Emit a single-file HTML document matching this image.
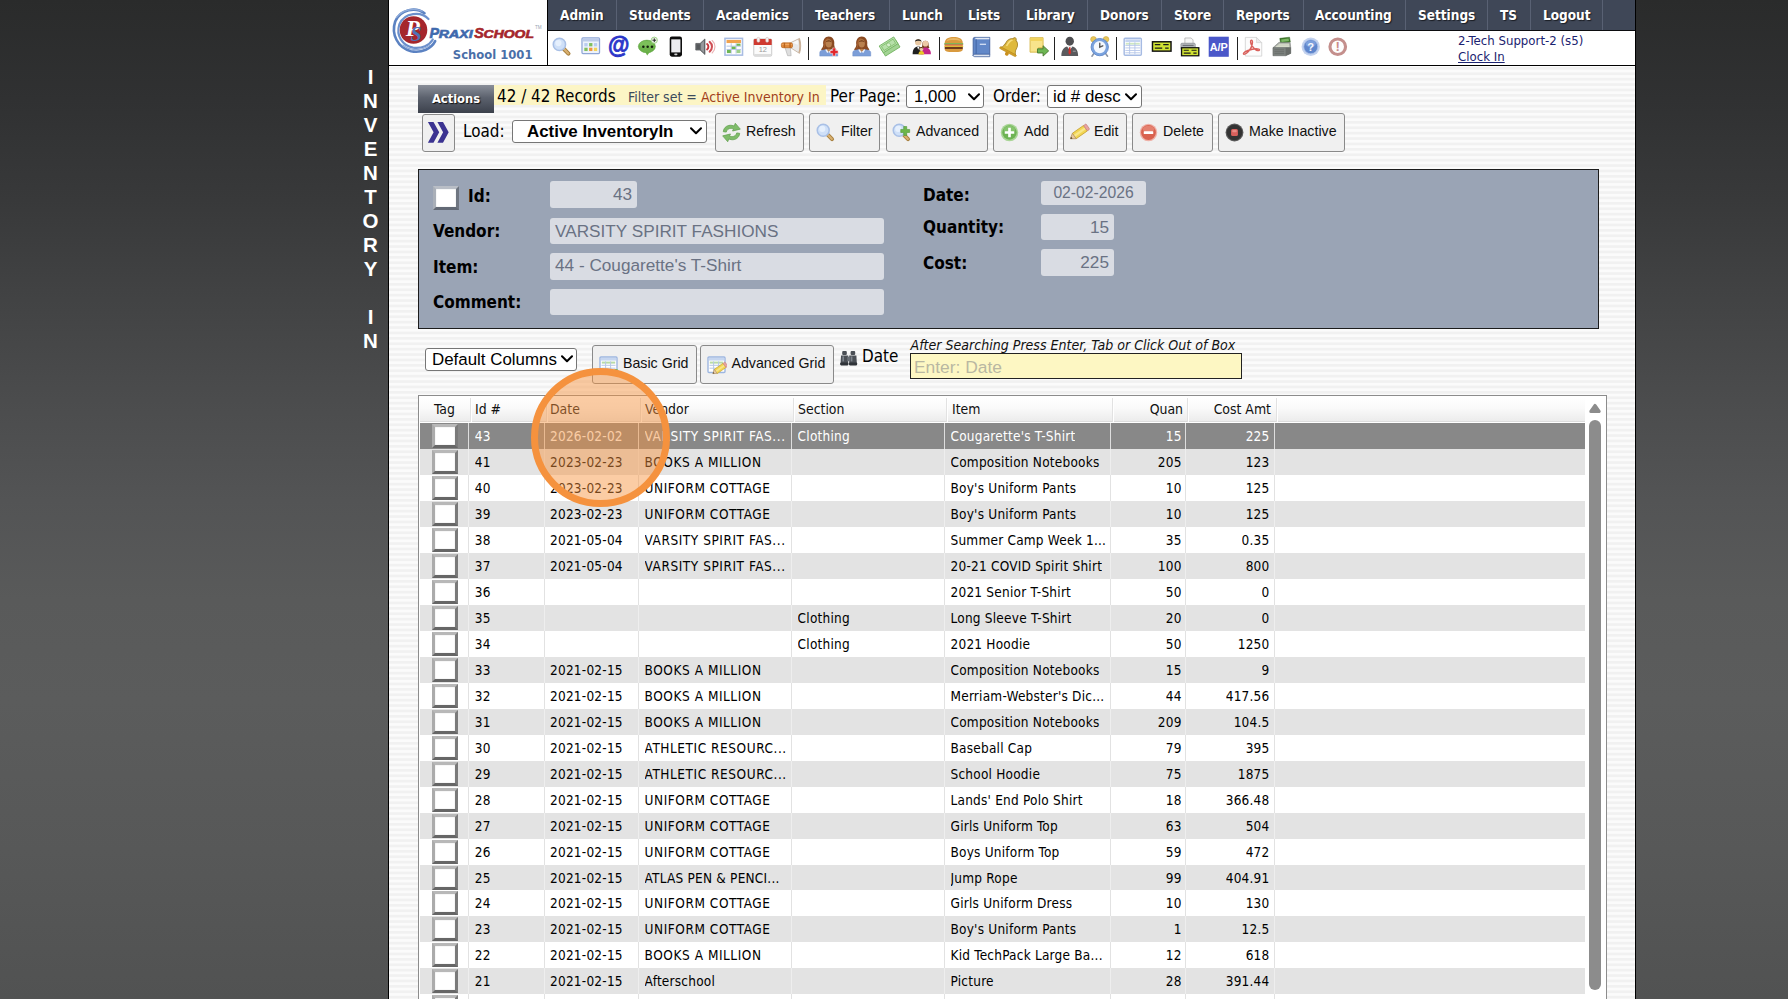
<!DOCTYPE html>
<html lang="en"><head><meta charset="utf-8"><title>Inventory In</title>
<style>
:root{--tah:"DejaVu Sans Condensed","DejaVu Sans","Liberation Sans",sans-serif;--ari:"Liberation Sans",Arial,sans-serif}
*{box-sizing:border-box;margin:0;padding:0}
html,body{width:1788px;height:999px;overflow:hidden}
body{position:relative;font-family:var(--tah);background:linear-gradient(to bottom,#2a2b2b 0px,#303132 100px,#38393a 200px,#424344 300px,#4b4c4d 400px,#535455 500px,#595a5a 600px,#5b5c5c 700px,#575858 850px,#515252 999px)}
.abs{position:absolute;white-space:nowrap}
#side{left:358px;top:65px;width:25px;text-align:center;color:#fff;font:bold 20.5px/24px var(--ari);}
#panel{left:388px;top:0;width:1248px;height:999px;border-left:1px solid #000;border-right:1px solid #000;background:repeating-linear-gradient(to bottom,#fbfbfb 0,#fbfbfb 1.7px,#f1f1f1 2.7px,#f1f1f1 4.4px,#fbfbfb 5.4px)}
#hdr{left:389px;top:0;width:1246px;height:66px;background:#fff;border-bottom:1px solid #000}
#nav{left:547px;top:0;width:1088px;height:31px;background:#3f4757;border-bottom:1px solid #0c0d10;border-left:1px solid #000}
.nv{top:0;height:30px;border-right:1px solid #596173;color:#fff;font:bold 13.5px/30px var(--tah);text-shadow:1px 1px 1px #1a1d24;padding:0 0 0 12px;letter-spacing:0}
#ldiv{left:547px;top:30px;width:1px;height:36px;background:#000}
.sep{top:37px;width:1px;height:23px;background:#222}
.t17{font:16.9px/20px var(--tah);color:#000}
.lab{font:bold 17px/20px var(--tah);color:#000}
.btn{height:39px;background:#f0f0f0;border:1px solid #8a8a8a;border-radius:3px;font:14.2px/34px var(--ari);color:#111}
.sel{height:23px;background:#fff;border:1px solid #767676;border-radius:3px;font:16.9px/21px var(--ari);color:#000}
.inp{background:#d9dce3;border-radius:3px;color:#6a7283;font:17.2px/26px var(--ari);padding:0 5px}
.cb{background:#fff;border:3px solid;border-color:#b9bec6 #6f7681 #626975 #a9afb8;box-shadow:inset 0 0 1px rgba(110,118,130,.6)}
#grid{left:418px;top:395px;width:1189px;height:620px;background:#fff;border:1px solid #8c8c8c}
#ghead{left:420px;top:397px;width:1165px;height:25px;background:linear-gradient(to bottom,#ffffff 0%,#fafafa 45%,#ececec 100%);border-bottom:1px solid #dcdcdc}
.hc{top:397px;height:25px;font:13.9px/25px var(--tah);color:#111}
.hs{top:398px;width:2px;height:24px;border-left:1px solid #e2e2e2;border-right:1px solid #fff}
.row{left:420px;width:1165px}
.row.alt{background:#e3e3e3}
.row.rsel{background:#888888;color:#fff}
.c{position:absolute;top:0;height:100%;font-family:var(--tah);font-size:13.5px;letter-spacing:.22px;line-height:inherit;white-space:nowrap;overflow:hidden}
.vs{position:absolute;top:0;width:1px;height:100%;background:#e2e2e2}
.row.alt .vs{background:#eeeeee}
.row.rsel .vs{background:#dedede}
.rcb{position:absolute;left:12.2px;top:1px;width:25.5px;height:24px;background:#fff;border:3px solid;border-color:#b8b8b8 #7a7a7a #666666 #ababab;box-shadow:inset 0 0 1px rgba(120,120,120,.6)}
</style></head>
<body>
<div class="abs" id="panel"></div>
<div class="abs" id="hdr"></div>
<div class="abs" id="nav"></div>
<div class="abs nv" style="left:548px;width:69px;padding-left:12px">Admin</div>
<div class="abs nv" style="left:617px;width:87px;padding-left:12px">Students</div>
<div class="abs nv" style="left:704px;width:99px;padding-left:12px">Academics</div>
<div class="abs nv" style="left:803px;width:87px;padding-left:12px">Teachers</div>
<div class="abs nv" style="left:890px;width:66px;padding-left:12px">Lunch</div>
<div class="abs nv" style="left:956px;width:58px;padding-left:12px">Lists</div>
<div class="abs nv" style="left:1014px;width:74px;padding-left:12px">Library</div>
<div class="abs nv" style="left:1088px;width:74px;padding-left:12px">Donors</div>
<div class="abs nv" style="left:1162px;width:62px;padding-left:12px">Store</div>
<div class="abs nv" style="left:1224px;width:80px;padding-left:12px">Reports</div>
<div class="abs nv" style="left:1304px;width:102px;padding-left:11px">Accounting</div>
<div class="abs nv" style="left:1406px;width:82px;padding-left:12px">Settings</div>
<div class="abs nv" style="left:1488px;width:43px;padding-left:12px">TS</div>
<div class="abs nv" style="left:1531px;width:72px;padding-left:12px">Logout</div>
<div class="abs" id="ldiv"></div>
<div class="abs sep" style="left:808px"></div>
<div class="abs sep" style="left:939px"></div>
<div class="abs sep" style="left:1054px"></div>
<div class="abs sep" style="left:1116px"></div>
<div class="abs sep" style="left:1237px"></div>
<div class="abs" id="side">I<br>N<br>V<br>E<br>N<br>T<br>O<br>R<br>Y<br>&nbsp;<br>I<br>N</div>
<svg class="abs" style="left:389px;top:0" width="158" height="65" viewBox="0 0 158 65"><g fill="none" stroke-linecap="round"><path d="M35.5 13.2 C27 6.8 11.5 8.8 6.2 21.5 C2 34 8.5 47.8 22 51.2 C33 53.2 42.5 48.5 46.2 41.2" stroke="#5b82c2" stroke-width="2.6"/><path d="M39.5 19 C32 11.2 15.5 12.2 10.3 24.5 C6.8 35.5 13.2 45.6 24 47.6 C33 48.8 40.5 45.2 43.8 39.5" stroke="#6c90cc" stroke-width="2.2"/><path d="M7.5 17.5 C13 9.5 25 7.6 33 11.2" stroke="#8fabd9" stroke-width="1.3"/><path d="M14 45 C20 50.6 32 51.4 40.5 45.6" stroke="#8fabd9" stroke-width="1.2"/></g><circle cx="24.5" cy="30" r="13.8" fill="#a5262c"/><text x="16.8" y="35.8" font-family="Liberation Serif,serif" font-style="italic" font-weight="bold" font-size="23" fill="#fff">P</text><text x="21.4" y="40.6" font-family="Liberation Serif,serif" font-style="italic" font-weight="bold" font-size="20" fill="#4d74b6">S</text><g font-family="Liberation Sans,sans-serif" font-style="italic" font-weight="bold"><text x="40.5" y="37.6" fill="#3f69ad" stroke="#3f69ad" stroke-width=".6"><tspan font-size="14.4">P</tspan><tspan font-size="10.4" dx="-.3" textLength="33.8" lengthAdjust="spacingAndGlyphs">RAXI</tspan></text><text x="85.2" y="37.6" fill="#a5262c" stroke="#a5262c" stroke-width=".6"><tspan font-size="14.4">S</tspan><tspan font-size="10.4" dx="-.2" textLength="50.3" lengthAdjust="spacingAndGlyphs">CHOOL</tspan></text></g><text x="146" y="28.8" font-family="Liberation Sans,sans-serif" font-size="4.6" fill="#9aa3b2">TM</text><text x="63.8" y="58.7" font-family="DejaVu Sans Condensed,DejaVu Sans,sans-serif" font-weight="bold" font-size="12.9" fill="#4a6fa8">School 1001</text></svg>
<svg class="abs" style="left:552.2px;top:37.0px;overflow:visible" width="19.5" height="19.5" viewBox="0 0 20 20"><line x1="12" y1="12" x2="16.9" y2="17" stroke="#a8803f" stroke-width="4.2" stroke-linecap="round"/><line x1="12.4" y1="12.4" x2="16.7" y2="16.8" stroke="#d9b070" stroke-width="2.2" stroke-linecap="round"/><circle cx="7.6" cy="7.6" r="6.3" fill="#cfe0f8" stroke="#a9c0e6" stroke-width="1.6"/><circle cx="6.6" cy="6.2" r="3.2" fill="#e6f0fd"/></svg>
<svg class="abs" style="left:580.6px;top:37.0px;overflow:visible" width="19.5" height="19.5" viewBox="0 0 20 20"><g transform="translate(0 -1)"><rect x="1" y="2" width="18" height="16" rx="1" fill="#eef3fb" stroke="#8fa6d6" stroke-width="1.3"/><rect x="1.6" y="2.6" width="16.8" height="3" fill="#bccbe9"/><rect x="3.4" y="7.2" width="3.4" height="3.4" fill="#b9cdf0"/><rect x="8.3" y="7.2" width="3.4" height="3.4" fill="#7fbf5f"/><rect x="13.2" y="7.2" width="3.4" height="3.4" fill="#b9cdf0"/><rect x="3.4" y="12" width="3.4" height="3.4" fill="#7fbf5f"/><rect x="8.3" y="12" width="3.4" height="3.4" fill="#ee9640"/><rect x="13.2" y="12" width="3.4" height="3.4" fill="#f1d45a"/></g></svg>
<svg class="abs" style="left:609.2px;top:37.0px;overflow:visible" width="19.5" height="19.5" viewBox="0 0 20 20"><text x="10" y="16.2" text-anchor="middle" font-family="Liberation Sans,sans-serif" font-weight="bold" font-size="22.5" fill="#2b36c9" stroke="#2b36c9" stroke-width=".8" transform="translate(0 -1.6) scale(1 1.09)">@</text></svg>
<svg class="abs" style="left:637.9px;top:37.0px;overflow:visible" width="19.5" height="19.5" viewBox="0 0 20 20"><path d="M7.6 15.4 L9.4 19 L12 15.6 Z" fill="#6cb24a"/><ellipse cx="9.1" cy="9.7" rx="8.8" ry="6.5" fill="#6cb24a" stroke="#5aa03c" stroke-width=".5"/><ellipse cx="8.6" cy="7.6" rx="7" ry="3.6" fill="#7cc05a"/><circle cx="5.5" cy="9.9" r="1.3" fill="#14200c"/><circle cx="9.9" cy="9.9" r="1.3" fill="#14200c"/><circle cx="14.3" cy="9.9" r="1.3" fill="#14200c"/><circle cx="16.7" cy="3.3" r="3.2" fill="#eef6e8" stroke="#8cc872" stroke-width=".8"/><path d="M16.7 1.4 v3.8 M14.8 3.3 h3.8" stroke="#222" stroke-width="1"/></svg>
<svg class="abs" style="left:666.0px;top:37.0px;overflow:visible" width="19.5" height="19.5" viewBox="0 0 20 20"><rect x="3.8" y="-.4" width="12.6" height="20.6" rx="2.2" fill="#0d0d0d"/><rect x="5.4" y="2.4" width="9.4" height="13.4" fill="#ececef"/><rect x="8.4" y="17" width="3.4" height="1.6" rx=".8" fill="#d0d0d0"/></svg>
<svg class="abs" style="left:695.2px;top:37.0px;overflow:visible" width="19.5" height="19.5" viewBox="0 0 20 20"><path d="M.8 6.6 h4.4 l5 -4.6 v16 l-5 -4.6 h-4.4 z" fill="#6a6d70" stroke="#4c4f52" stroke-width=".7"/><path d="M6.2 6.6 l3 -2.8 v12.4 l-3 -2.8 z" fill="#97999c"/><rect x="1.6" y="7.6" width="3.4" height="4.8" fill="#55585b"/><path d="M12.4 7.2 a3.6 3.6 0 0 1 0 5.6" fill="none" stroke="#c8363c" stroke-width="2" stroke-linecap="round"/><path d="M15 5 a6.4 6.4 0 0 1 0 10" fill="none" stroke="#cf4f55" stroke-width="2.1" stroke-linecap="round"/><path d="M17.6 3.6 a8.6 8.6 0 0 1 0 12.8" fill="none" stroke="#eab3b5" stroke-width="1.2" stroke-linecap="round"/></svg>
<svg class="abs" style="left:723.6px;top:37.0px;overflow:visible" width="19.5" height="19.5" viewBox="0 0 20 20"><rect x="1" y="1.4" width="18" height="17.2" fill="#fff" stroke="#a9bde3" stroke-width="1.6"/><rect x="2.6" y="3" width="14.8" height="3.2" fill="#f0a24e"/><path d="M2.6 9.4 H17.4 M2.6 12.8 H17.4 M7.4 6.4 V17 M12.4 6.4 V17" stroke="#b3c3e4" stroke-width="1"/><rect x="7.9" y="9.9" width="4" height="2.4" fill="#6db653"/><rect x="12.9" y="6.8" width="4" height="2.2" fill="#6db653"/><rect x="3" y="13.3" width="4" height="3.2" fill="#6db653"/><rect x="12.9" y="13.3" width="4" height="3.2" fill="#9fd08b"/></svg>
<svg class="abs" style="left:752.5px;top:37.0px;overflow:visible" width="19.5" height="19.5" viewBox="0 0 20 20"><rect x=".8" y="2" width="18.4" height="17.6" rx="1.2" fill="#fbfbfb" stroke="#c4c4c4" stroke-width=".9"/><rect x="1.2" y="17.4" width="17.6" height="2" fill="#dcdcdc"/><path d="M.8 3.2 a1.2 1.2 0 0 1 1.2 -1.2 h16 a1.2 1.2 0 0 1 1.2 1.2 v5 h-18.4 z" fill="#cf3a30"/><rect x="4" y=".4" width="3" height="5" rx="1.4" fill="#f6f2f2" stroke="#c9a9a6" stroke-width=".5"/><rect x="13" y=".4" width="3" height="5" rx="1.4" fill="#f6f2f2" stroke="#c9a9a6" stroke-width=".5"/><text x="10" y="15.6" text-anchor="middle" font-family="Liberation Sans,sans-serif" font-size="7.6" fill="#9a9a9a">12</text></svg>
<svg class="abs" style="left:781.0px;top:37.0px;overflow:visible" width="19.5" height="19.5" viewBox="0 0 20 20"><path d="M4 10.6 h5.6 l.8 8.6 h-3.6 z" fill="#dedede" stroke="#a8a8a8" stroke-width=".6"/><path d="M10.4 5.6 L19 1.4 C20.6 5 20.6 13 19 16.8 L10.4 11.4 Z" fill="#e9e9e9" stroke="#b8a08a" stroke-width=".7"/><path d="M18.4 2 C19.8 5.6 19.8 12.6 18.4 16.2" fill="none" stroke="#c9a98a" stroke-width="1.3"/><path d="M11.6 6 L17.4 3.2 V8 Z" fill="#f8f8f8"/><rect x=".4" y="6" width="11.4" height="5" rx="1.6" fill="#e08a3c" stroke="#b8641e" stroke-width=".7"/><rect x="1.2" y="6.8" width="9.8" height="1.5" rx=".7" fill="#f0a862"/><rect x="2.8" y="6" width="1.4" height="5" fill="#b8641e"/><rect x="8.6" y="6" width="1.4" height="5" fill="#b8641e"/></svg>
<svg class="abs" style="left:819.2px;top:37.0px;overflow:visible" width="19.5" height="19.5" viewBox="0 0 20 20"><path d="M4.4 8 C3.6 3 6.4 -.4 10 -.4 C13.6 -.4 16.4 3 15.6 8 C15.6 10.6 17.6 11.6 17.8 13.4 C14 15.2 6 15.2 2.2 13.4 C2.4 11.6 4.4 10.6 4.4 8 Z" fill="#8a4a22"/><path d="M5.4 8 C5 4 7 1 10 1 C9 3 7 5 6.6 8 C6.4 10 5.4 11.4 4 12.6 C4.8 11.2 5.4 10 5.4 8 Z" fill="#a86232"/><ellipse cx="10" cy="6.6" rx="3.2" ry="4.2" fill="#b9814f"/><path d="M6.8 5.6 C7.8 2.6 12.2 2.6 13.2 5.6 C12 4.2 8 4.2 6.8 5.6 Z" fill="#6e3816"/><path d="M.8 19.6 V15.8 C.8 14.2 3 13.2 7.4 12.8 L10 15 L12.6 12.8 C17 13.2 19.2 14.2 19.2 15.8 V19.6 Z" fill="#7c9ed8" stroke="#6a8bc8" stroke-width=".5"/><path d="M7.4 12.8 L10 15.6 L12.6 12.8 C11 11.8 9 11.8 7.4 12.8 Z" fill="#b9814f"/><path d="M6.4 13 L7.6 12.6 L10 15.4 L8.4 16.4 Z M13.6 13 L12.4 12.6 L10 15.4 L11.6 16.4 Z" fill="#eef2fa"/><path d="M12.6 13.4 h2.6 v-2.6 h3 v2.6 h2.6 v3 h-2.6 v2.6 h-3 v-2.6 h-2.6 z" fill="#e2252b" stroke="#fff" stroke-width=".5" transform="translate(-1.2 0.4)"/></svg>
<svg class="abs" style="left:852.1px;top:37.0px;overflow:visible" width="19.5" height="19.5" viewBox="0 0 20 20"><path d="M4.4 8 C3.6 3 6.4 -.4 10 -.4 C13.6 -.4 16.4 3 15.6 8 C15.6 10.6 17.6 11.6 17.8 13.4 C14 15.2 6 15.2 2.2 13.4 C2.4 11.6 4.4 10.6 4.4 8 Z" fill="#8a4a22"/><path d="M5.4 8 C5 4 7 1 10 1 C9 3 7 5 6.6 8 C6.4 10 5.4 11.4 4 12.6 C4.8 11.2 5.4 10 5.4 8 Z" fill="#a86232"/><ellipse cx="10" cy="6.6" rx="3.2" ry="4.2" fill="#b9814f"/><path d="M6.8 5.6 C7.8 2.6 12.2 2.6 13.2 5.6 C12 4.2 8 4.2 6.8 5.6 Z" fill="#6e3816"/><path d="M.8 19.6 V15.8 C.8 14.2 3 13.2 7.4 12.8 L10 15 L12.6 12.8 C17 13.2 19.2 14.2 19.2 15.8 V19.6 Z" fill="#7c9ed8" stroke="#6a8bc8" stroke-width=".5"/><path d="M7.4 12.8 L10 15.6 L12.6 12.8 C11 11.8 9 11.8 7.4 12.8 Z" fill="#b9814f"/><path d="M6.4 13 L7.6 12.6 L10 15.4 L8.4 16.4 Z M13.6 13 L12.4 12.6 L10 15.4 L11.6 16.4 Z" fill="#eef2fa"/></svg>
<svg class="abs" style="left:880.2px;top:37.0px;overflow:visible" width="19.5" height="19.5" viewBox="0 0 20 20"><g transform="rotate(-32 10 10)"><rect x="1.2" y="7.6" width="17.6" height="8.2" fill="#a2d393" stroke="#6fb05c" stroke-width=".8"/><rect x="1.2" y="3.6" width="17.6" height="8.2" fill="#b7e0aa" stroke="#6fb05c" stroke-width=".8"/><rect x="3" y="5.2" width="14" height="5" fill="none" stroke="#79b765" stroke-width=".7"/><circle cx="10" cy="7.7" r="2" fill="#d6efcc" stroke="#79b765" stroke-width=".6"/></g></svg>
<svg class="abs" style="left:912.2px;top:37.0px;overflow:visible" width="19.5" height="19.5" viewBox="0 0 20 20"><circle cx="6.4" cy="5.4" r="3.3" fill="#e9c9a4"/><path d="M3 5 C3 1.4 9.8 1.4 9.8 5 C8.6 3.6 4.4 3.6 3 5 Z" fill="#1e1e1e"/><path d="M.6 17.6 C.6 11.8 3.4 9.8 6.4 9.8 C9.4 9.8 11.6 11.8 11.6 17.6 Z" fill="#1f1f1f"/><path d="M5.2 9.9 L6.4 13 L7.6 9.9 Z" fill="#fff"/><path d="M10.6 7.6 C10 2.6 17.6 2.6 17 7.6 C17 9.8 17.6 10.6 18 11.2 H9.6 C10 10.6 10.6 9.8 10.6 7.6 Z" fill="#7a3f1f"/><circle cx="13.8" cy="6.8" r="2.9" fill="#ecc9a6"/><path d="M9 17.8 C9 12.6 11.2 10.8 13.8 10.8 C16.4 10.8 19.4 12.6 19.4 17.8 Z" fill="#c3268a"/><circle cx="9.6" cy="12.4" r="2.1" fill="#ecc9a6"/><path d="M7.6 12 C7.8 9.6 11.4 9.6 11.6 12 C10.6 11 8.6 11 7.6 12 Z" fill="#5a3a1a"/><path d="M6.6 18 C6.6 15.4 8 14.4 9.6 14.4 C11.2 14.4 12.6 15.4 12.6 18 Z" fill="#e9c928"/></svg>
<svg class="abs" style="left:944.2px;top:37.0px;overflow:visible" width="19.5" height="19.5" viewBox="0 0 20 20"><g transform="translate(-.8 -1.9) scale(1.08 .96)"><path d="M1.4 8.6 C1.4 3.4 5.6 2 10 2 C14.4 2 18.6 3.4 18.6 8.6 Z" fill="#d99a3e"/><path d="M3 6.4 C4.4 3.6 7.6 3 10 3 C12.4 3 15.6 3.6 17 6.4 C14 4.8 6 4.8 3 6.4 Z" fill="#e9b866"/><rect x="1" y="8.6" width="18" height="1.6" fill="#6aa83a"/><rect x="1.4" y="10" width="17.2" height="1.4" fill="#d8412c"/><rect x="1" y="11.2" width="18" height="1.5" fill="#f1cf3c"/><rect x="1.4" y="12.5" width="17.2" height="2.3" fill="#6e3b1c"/><path d="M1.4 14.8 H18.6 C18.6 17.6 16.6 18 10 18 C3.4 18 1.4 17.6 1.4 14.8 Z" fill="#d99a3e"/></g></svg>
<svg class="abs" style="left:971.9px;top:37.0px;overflow:visible" width="19.5" height="19.5" viewBox="0 0 20 20"><path d="M1.2 2 a1.6 1.6 0 0 1 1.6 -1.6 h15.4 v17.6 h-15.4 a1.6 1.6 0 0 0 -1.6 1.4 z" fill="#6288c8" stroke="#3f5e9a" stroke-width=".9"/><path d="M3.4 .8 h14.4 v1.6 h-14.4 z" fill="#e4eaf5"/><path d="M1.2 19 a1.6 1.6 0 0 1 1.6 -1.4 h15.4 v2.6 h-15.4 a1.6 1.6 0 0 1 -1.6 -1.2 z" fill="#dfe6f2" stroke="#3f5e9a" stroke-width=".8"/><rect x="3.6" y="2.4" width="1.4" height="15" fill="#4a6eae"/><rect x="8" y="6.8" width="6.4" height="1.4" fill="#cfdcf2"/></svg>
<svg class="abs" style="left:1000.9px;top:37.0px;overflow:visible" width="19.5" height="19.5" viewBox="0 0 20 20"><g transform="translate(-1.4 -2) scale(1.15) rotate(28 10 10)"><path d="M10 1.6 C10.9 1.6 11.6 2.3 11.5 3.2 C14.4 4.2 15.4 7 15.4 10 C15.4 12.6 16.4 14 17.6 15.2 H2.4 C3.6 14 4.6 12.6 4.6 10 C4.6 7 5.6 4.2 8.5 3.2 C8.4 2.3 9.1 1.6 10 1.6 Z" fill="#dfb93c" stroke="#a8862a" stroke-width=".8"/><path d="M6.6 6 C7.2 4.8 8.4 4.2 9.4 4.2 C8 5.4 7.2 8 7.2 11.6 H5.8 C6 9.6 6 7.4 6.6 6 Z" fill="#f7dd7c"/><rect x="1.8" y="14.6" width="16.4" height="1.8" rx=".9" fill="#d29f27" stroke="#b98a1e" stroke-width=".5"/><circle cx="10" cy="17.6" r="1.7" fill="#c98f1d"/></g></svg>
<svg class="abs" style="left:1029.0px;top:37.0px;overflow:visible" width="19.5" height="19.5" viewBox="0 0 20 20"><g transform="translate(-.4 -1) scale(1.06)"><path d="M1.4 1.6 h12.6 v9.6 l-4.4 4.4 h-8.2 z" fill="#f8e48b" stroke="#d7b94a" stroke-width=".9"/><rect x="1.9" y="2.1" width="11.6" height="2.6" fill="#f1d25a"/><path d="M9.6 15.6 v-4.4 h4.4 z" fill="#f3d970" stroke="#d7b94a" stroke-width=".7"/><path d="M8.6 12.4 h5.4 v-3 l5.4 5 l-5.4 5 v-3 h-5.4 z" fill="#6db653" stroke="#4a7a2f" stroke-width=".9"/></g></svg>
<svg class="abs" style="left:1060.2px;top:37.0px;overflow:visible" width="19.5" height="19.5" viewBox="0 0 20 20"><g transform="translate(0 -1.2) scale(1 1.06)"><circle cx="10" cy="5.2" r="4.3" fill="#4f4f52"/><path d="M1.4 19.4 C1.4 13.4 4.6 10.6 7.4 10.4 L10 13.4 L12.6 10.4 C15.4 10.6 18.6 13.4 18.6 19.4 Z" fill="#5a5a5d"/><path d="M7.4 10.4 L10 13.6 L12.6 10.4 C11 9.8 9 9.8 7.4 10.4 Z" fill="#f0f0f0"/><path d="M9.3 11 h1.4 l.7 5.6 l-1.4 1.6 l-1.4 -1.6 z" fill="#d4302a"/><rect x="13.2" y="14.4" width="3" height="1" fill="#9c9c9f"/></g></svg>
<svg class="abs" style="left:1089.5px;top:37.0px;overflow:visible" width="19.5" height="19.5" viewBox="0 0 20 20"><g transform="translate(-1.1 -1.4) scale(1.11)"><circle cx="4.2" cy="3.4" r="2.6" fill="#e8c65a" stroke="#c9a232" stroke-width=".5"/><circle cx="15.8" cy="3.4" r="2.6" fill="#e8c65a" stroke="#c9a232" stroke-width=".5"/><path d="M4.6 16.6 l-1.8 2.4 M15.4 16.6 l1.8 2.4" stroke="#8c95a6" stroke-width="1.5" stroke-linecap="round"/><circle cx="10" cy="10.6" r="8" fill="#7ba3de" stroke="#5a84c8" stroke-width=".8"/><circle cx="10" cy="10.6" r="5.6" fill="#f4f8fe"/><path d="M10 7 V10.6 L12.8 9.4" fill="none" stroke="#5a5a5a" stroke-width="1.3" stroke-linecap="round"/></g></svg>
<svg class="abs" style="left:1122.5px;top:37.0px;overflow:visible" width="19.5" height="19.5" viewBox="0 0 20 20"><rect x="1.2" y="1.2" width="17.6" height="17.6" rx="1" fill="#fff" stroke="#a6bbe3" stroke-width="1.5"/><rect x="2.4" y="2.4" width="15.2" height="2.8" fill="#c6d5f1"/><rect x="2.8" y="6" width="14.4" height="1.8" fill="#cfe8c1"/><path d="M2.4 8.6 H17.6 M2.4 11.2 H17.6 M2.4 13.8 H17.6 M2.4 16.2 H17.6 M6.8 5.4 V17.6 M12.2 5.4 V17.6" stroke="#b4c5e8" stroke-width=".9"/></svg>
<svg class="abs" style="left:1151.5px;top:37.0px;overflow:visible" width="19.5" height="19.5" viewBox="0 0 20 20"><g transform="translate(.5 4.9)"><rect x="0" y="0" width="19" height="9.6" fill="#d0e233" stroke="#111" stroke-width="1.5"/><path d="M2.4 3 H8 M11 3 H16.6 M2.4 6.4 H10 M13 6.4 H16.6" stroke="#1a1a1a" stroke-width="1.3"/></g></svg>
<svg class="abs" style="left:1179.8px;top:37.0px;overflow:visible" width="19.5" height="19.5" viewBox="0 0 20 20"><path d="M5 1 h6.4 l2 2 v5 h-8.4 z" fill="#f6f6f6" stroke="#a6a6a6" stroke-width=".7"/><rect x="1" y="6.4" width="14.6" height="6.8" rx="1" fill="#b9bcc0" stroke="#80848a" stroke-width=".7"/><rect x="2.6" y="8" width="11.4" height="1.4" fill="#6f7378"/><g transform="translate(1.6 11) scale(.93 .86)"><rect x="0" y="0" width="19" height="9.6" fill="#d0e233" stroke="#111" stroke-width="1.5"/><path d="M2.4 3 H8 M11 3 H16.6 M2.4 6.4 H10 M13 6.4 H16.6" stroke="#1a1a1a" stroke-width="1.3"/></g></svg>
<svg class="abs" style="left:1208.5px;top:37.0px;overflow:visible" width="19.5" height="19.5" viewBox="0 0 20 20"><rect x="-.3" y="-.3" width="20.6" height="20.6" fill="#4a57c9"/><text x="10" y="14.2" text-anchor="middle" font-family="Liberation Sans,sans-serif" font-weight="bold" font-size="11.4" fill="#fff" textLength="18.6" lengthAdjust="spacingAndGlyphs">A/P</text></svg>
<svg class="abs" style="left:1243.2px;top:37.0px;overflow:visible" width="19.5" height="19.5" viewBox="0 0 20 20"><path d="M2.4 .4 h11.4 l5.4 5.4 v13.8 h-16.8 z" fill="#fcfcfc" stroke="#cfcfcf" stroke-width=".8"/><path d="M13.8 .4 v5.4 h5.4 z" fill="#ececec" stroke="#cfcfcf" stroke-width=".6"/><path d="M8.4 3.2 C10.4 3 9.8 7.4 8.4 10.6 C7.2 13.4 3.6 17.6 1.2 17.8 C-.4 17.6 .6 15.4 5 13.8 C9 12.4 14 11.6 16.2 12.4 C17.8 13.2 16.4 14.6 13.8 13.6 C11 12.2 8.2 8 7.8 5.4 C7.6 4 7.8 3.3 8.4 3.2 Z" fill="none" stroke="#d6504a" stroke-width="1.5" stroke-linejoin="round" opacity=".9"/></svg>
<svg class="abs" style="left:1271.7px;top:37.0px;overflow:visible" width="19.5" height="19.5" viewBox="0 0 20 20"><path d="M8 1.4 L18 .2 L18.8 5.2 L8.8 6.8 Z" fill="#3f7a2c" stroke="#2f5f20" stroke-width=".5"/><path d="M9.4 2.6 L17 1.6 L17.4 4 L9.8 5.2 Z" fill="#7db866"/><path d="M1 11 L7 5.6 H18.6 L19.2 11 Z" fill="#a9ada6" stroke="#7a7e78" stroke-width=".6"/><path d="M3.4 10.4 L7.6 6.8 H17.4 L17.8 10.4 Z" fill="#e2e6d6"/><path d="M6.4 8 H17.4 M5 9.2 H17.6" stroke="#b9bdae" stroke-width=".6"/><path d="M1 11 H19.2 V16.8 L14 19.2 H1 Z" fill="#7d827f" stroke="#5c605d" stroke-width=".6"/><rect x="2.4" y="12.6" width="10" height="1" fill="#6a6e6b"/><rect x="2.4" y="14.6" width="10" height="1" fill="#6a6e6b"/><rect x="2.4" y="16.6" width="10" height="1" fill="#6a6e6b"/><path d="M14 19.2 V11 H19.2 V16.8 Z" fill="#686c69"/></svg>
<svg class="abs" style="left:1300.7px;top:37.0px;overflow:visible" width="19.5" height="19.5" viewBox="0 0 20 20"><circle cx="10" cy="10" r="9.4" fill="#c3d2ee"/><circle cx="10" cy="10" r="7.2" fill="#5f86cc"/><circle cx="10" cy="10" r="7.2" fill="none" stroke="#a9bfe8" stroke-width=".8"/><ellipse cx="10" cy="7" rx="5.2" ry="3.4" fill="#7c9fdc"/><text x="10" y="14" text-anchor="middle" font-family="Liberation Sans,sans-serif" font-weight="bold" font-size="11.4" fill="#f4f7fd">?</text></svg>
<svg class="abs" style="left:1327.5px;top:37.0px;overflow:visible" width="19.5" height="19.5" viewBox="0 0 20 20"><circle cx="10" cy="10" r="8" fill="#fdfdfd" stroke="#c48f8c" stroke-width="3.2"/><text x="10" y="14.8" text-anchor="middle" font-family="Liberation Sans,sans-serif" font-weight="bold" font-size="13.6" fill="#cc8c88">!</text></svg>
<div class="abs" style="left:1458px;top:33px;font:13.1px/15px var(--tah);color:#1b2370">2-Tech Support-2 (s5)</div>
<div class="abs" style="left:1458px;top:49px;font:13.1px/15px var(--tah);color:#1b2370;text-decoration:underline">Clock In</div>
<div class="abs" style="left:418px;top:85px;width:76px;height:28px;background:linear-gradient(to bottom,#8a8f99 0%,#5c626e 45%,#3c414c 100%);color:#fff;font:bold 12.8px/27px var(--tah);text-align:center;text-shadow:1px 1px 1px #111">Actions</div>
<div class="abs" style="left:494px;top:85px;width:332px;height:20px;background:#fcf5c5"></div>
<div class="abs t17" style="left:497px;top:86px">42 / 42 Records</div>
<div class="abs" style="left:628px;top:88px;font:14px/18px var(--tah);color:#3b4a5c">Filter set = <span style="color:#a2401c">Active Inventory In</span></div>
<div class="abs t17" style="left:830px;top:86px">Per Page:</div>
<div class="abs sel" style="left:906px;top:85px;width:78px;padding-left:7px">1,000</div>
<div class="abs t17" style="left:993px;top:86px">Order:</div>
<div class="abs sel" style="left:1047px;top:85px;width:95px;padding-left:5px">id # desc</div>
<div class="abs btn" style="left:422px;top:114px;width:33px;height:38px"></div>
<div class="abs t17" style="left:463px;top:121px">Load:</div>
<div class="abs sel" style="left:512px;top:120px;width:195px;height:23px;padding-left:14px;font:bold 16.9px/21px var(--ari)">Active InventoryIn</div>
<div class="abs btn" style="left:715px;top:113px;width:89px;padding-left:30px">Refresh</div>
<div class="abs btn" style="left:809px;top:113px;width:71px;padding-left:31px">Filter</div>
<div class="abs btn" style="left:886px;top:113px;width:102px;padding-left:29px">Advanced</div>
<div class="abs btn" style="left:993px;top:113px;width:65px;padding-left:30px">Add</div>
<div class="abs btn" style="left:1063px;top:113px;width:64px;padding-left:30px">Edit</div>
<div class="abs btn" style="left:1132px;top:113px;width:81px;padding-left:30px">Delete</div>
<div class="abs btn" style="left:1218px;top:113px;width:127px;padding-left:30px">Make Inactive</div>
<div class="abs" style="left:418px;top:169px;width:1181px;height:160px;background:#9aa4b5;border:1px solid #1c1c1c;border-right-width:1.5px;border-bottom-width:1.5px"></div>
<div class="abs cb" style="left:433px;top:186px;width:26px;height:24px"></div>
<div class="abs lab" style="left:468px;top:186px">Id:</div>
<div class="abs lab" style="left:433px;top:221px">Vendor:</div>
<div class="abs lab" style="left:433px;top:257px">Item:</div>
<div class="abs lab" style="left:433px;top:292px">Comment:</div>
<div class="abs lab" style="left:923px;top:185px">Date:</div>
<div class="abs lab" style="left:923px;top:217px">Quantity:</div>
<div class="abs lab" style="left:923px;top:253px">Cost:</div>
<div class="abs inp" style="left:550px;top:181px;width:87px;height:27px;text-align:right;line-height:27px">43</div>
<div class="abs inp" style="left:550px;top:218px;width:334px;height:26px">VARSITY SPIRIT FASHIONS</div>
<div class="abs inp" style="left:550px;top:253px;width:334px;height:27px;line-height:24px">44 - Cougarette&#39;s T-Shirt</div>
<div class="abs inp" style="left:550px;top:289px;width:334px;height:26px"></div>
<div class="abs inp" style="left:1041px;top:181px;width:105px;height:24px;text-align:center;font-size:15.7px;line-height:24px">02-02-2026</div>
<div class="abs inp" style="left:1041px;top:214px;width:73px;height:26px;text-align:right">15</div>
<div class="abs inp" style="left:1041px;top:249px;width:73px;height:27px;text-align:right;line-height:27px">225</div>
<div class="abs sel" style="left:425px;top:348px;width:152px;padding-left:6px">Default Columns</div>
<div class="abs btn" style="left:592px;top:345px;width:105px;padding-left:30px">Basic Grid</div>
<div class="abs btn" style="left:700px;top:345px;width:134px;padding-left:30.5px">Advanced Grid</div>
<svg class="abs" style="left:840px;top:349.5px" width="17.5" height="16" viewBox="0 0 17.5 16"><rect x="2.2" y="1" width="4.6" height="4" rx="1" fill="#4b5056"/><rect x="10.6" y="1" width="4.6" height="4" rx="1" fill="#4b5056"/><path d="M1 5.5 h7.2 v9.5 h-7.7 z" fill="#4b5056"/><path d="M9.2 5.5 h7.2 l.5 9.5 h-7.7 z" fill="#4b5056"/><rect x="7.2" y="6.6" width="3" height="4.6" fill="#6a7077"/><rect x=".3" y="12.4" width="8" height="3" rx=".8" fill="#2f3338"/><rect x="9.1" y="12.4" width="8" height="3" rx=".8" fill="#2f3338"/><rect x="2.4" y="6.4" width="1.6" height="5" fill="#7d848c"/><rect x="10.8" y="6.4" width="1.6" height="5" fill="#7d848c"/></svg>
<svg class="abs" style="left:598.5px;top:355px" width="20" height="20" viewBox="0 0 20 20"><rect x="1" y="2" width="17" height="15.5" rx="1" fill="#fff" stroke="#9db6e0" stroke-width="1.4"/><rect x="2" y="3" width="15" height="2.6" fill="#c6d6f0"/><rect x="2.8" y="6.6" width="13.4" height="2" fill="#b8dba6"/><path d="M2.5 10.3 H16.5 M2.5 13.2 H16.5 M6.6 6.4 V16.6 M11.6 6.4 V16.6" stroke="#b7c8e6" stroke-width="1"/><circle cx="17" cy="16.6" r="2.6" fill="#6db253"/></svg>
<svg class="abs" style="left:706.8px;top:355px" width="20" height="20" viewBox="0 0 20 20"><rect x="1" y="2" width="17" height="15.5" rx="1" fill="#fff" stroke="#9db6e0" stroke-width="1.4"/><rect x="2" y="3" width="15" height="2.6" fill="#c6d6f0"/><rect x="2.8" y="6.6" width="13.4" height="2" fill="#b8dba6"/><path d="M2.5 10.3 H16.5 M2.5 13.2 H16.5 M6.6 6.4 V16.6 M11.6 6.4 V16.6" stroke="#b7c8e6" stroke-width="1"/><g transform="translate(5.5 5.5) scale(.78)"><g transform="rotate(-35 10 10)"><rect x="3" y="6.7" width="13.6" height="6.6" fill="#f2d552" stroke="#c9a436" stroke-width=".8"/><rect x="3" y="8.9" width="13.6" height="2.2" fill="#f8e68a"/><path d="M3 6.7 L-1.8 10 L3 13.3 Z" fill="#e6c9a0" stroke="#b8935a" stroke-width=".7"/><path d="M-1.8 10 L0 8.8 L0 11.2 Z" fill="#4a3a2a"/><rect x="16.6" y="6.7" width="3" height="6.6" rx=".9" fill="#e8a3a0" stroke="#c07a76" stroke-width=".6"/></g></g></svg>
<svg class="abs" style="left:427px;top:121px" width="23" height="23" viewBox="0 0 23 23"><path d="M0.9 1 L6.5 1 L12.200000000000001 11.35 L6.5 21.7 L0.9 21.7 L6.6000000000000005 11.35 Z M10.4 1 L16.0 1 L21.700000000000003 11.35 L16.0 21.7 L10.4 21.7 L16.1 11.35 Z" fill="#3b3391"/></svg>
<svg class="abs" style="left:721px;top:122px" width="21" height="21" viewBox="0 0 20 20"><path d="M2.2 9.2 C2.6 4.8 6.5 2.6 10.2 3.2 L12.6 3.8 L13.6 1.2 L18.4 6.8 L11 8.6 L11.9 6.4 C8.4 5.4 5.8 6.6 5 9.6 Z" fill="#7fbc6a" stroke="#5f9e4c" stroke-width=".7"/><path d="M17.8 10.8 C17.4 15.2 13.5 17.4 9.8 16.8 L7.4 16.2 L6.4 18.8 L1.6 13.2 L9 11.4 L8.1 13.6 C11.6 14.6 14.2 13.4 15 10.4 Z" fill="#7fbc6a" stroke="#5f9e4c" stroke-width=".7"/></svg>
<svg class="abs" style="left:815.5px;top:122.5px" width="19" height="19" viewBox="0 0 20 20"><line x1="12" y1="12" x2="16.9" y2="17" stroke="#a8803f" stroke-width="4.2" stroke-linecap="round"/><line x1="12.4" y1="12.4" x2="16.7" y2="16.8" stroke="#d9b070" stroke-width="2.2" stroke-linecap="round"/><circle cx="7.6" cy="7.6" r="6.3" fill="#cfe0f8" stroke="#a9c0e6" stroke-width="1.6"/><circle cx="6.6" cy="6.2" r="3.2" fill="#e6f0fd"/></svg>
<svg class="abs" style="left:892px;top:122.5px" width="19" height="19" viewBox="0 0 20 20"><line x1="12" y1="12" x2="16.9" y2="17" stroke="#a8803f" stroke-width="4.2" stroke-linecap="round"/><line x1="12.4" y1="12.4" x2="16.7" y2="16.8" stroke="#d9b070" stroke-width="2.2" stroke-linecap="round"/><circle cx="7.6" cy="7.6" r="6.3" fill="#cfe0f8" stroke="#a9c0e6" stroke-width="1.6"/><circle cx="6.6" cy="6.2" r="3.2" fill="#e6f0fd"/><path d="M9.2 6.8 h3.1 v-3.1 h3.2 v3.1 h3.1 v3.2 h-3.1 v3.1 h-3.2 v-3.1 h-3.1 z" fill="#6cb64a" stroke="#4d9431" stroke-width=".6"/></svg>
<svg class="abs" style="left:1000px;top:123.3px" width="19" height="19" viewBox="0 0 20 20"><circle cx="10" cy="10" r="9.2" fill="#a9d596"/><circle cx="10" cy="10" r="7.6" fill="#6eb354"/><ellipse cx="10" cy="6.8" rx="6" ry="3.8" fill="#86c46e"/><path d="M8.6 5 h2.8 v3.6 h3.6 v2.8 h-3.6 v3.6 h-2.8 v-3.6 h-3.6 v-2.8 h3.6 z" fill="#fff"/></svg>
<svg class="abs" style="left:1069.7px;top:122.3px" width="20" height="20" viewBox="0 0 20 20"><g transform="rotate(-35 10 10)"><rect x="3" y="6.7" width="13.6" height="6.6" fill="#f2d552" stroke="#c9a436" stroke-width=".8"/><rect x="3" y="8.9" width="13.6" height="2.2" fill="#f8e68a"/><path d="M3 6.7 L-1.8 10 L3 13.3 Z" fill="#e6c9a0" stroke="#b8935a" stroke-width=".7"/><path d="M-1.8 10 L0 8.8 L0 11.2 Z" fill="#4a3a2a"/><rect x="16.6" y="6.7" width="3" height="6.6" rx=".9" fill="#e8a3a0" stroke="#c07a76" stroke-width=".6"/></g></svg>
<svg class="abs" style="left:1139px;top:123.3px" width="19" height="19" viewBox="0 0 20 20"><circle cx="10" cy="10" r="9.2" fill="#eeb0a6"/><circle cx="10" cy="10" r="7.8" fill="#d9624f"/><ellipse cx="10" cy="6.6" rx="6" ry="3.6" fill="#e48170"/><rect x="5" y="8.6" width="10" height="3" rx=".6" fill="#fff"/></svg>
<svg class="abs" style="left:1225px;top:123.3px" width="19" height="19" viewBox="0 0 20 20"><circle cx="10" cy="10" r="9.4" fill="#5a5a5a"/><circle cx="10" cy="10" r="8.2" fill="#333"/><rect x="6.4" y="6.4" width="7.2" height="7.2" rx="1.6" fill="#d8605c"/><rect x="7.6" y="7.4" width="4.8" height="2.4" rx="1" fill="#e98b85"/></svg>
<svg class="abs" style="left:968px;top:93px" width="12" height="8" viewBox="0 0 12 8"><path d="M1 1.2 L6 6.2 L11 1.2" fill="none" stroke="#000" stroke-width="2" stroke-linecap="round" stroke-linejoin="round"/></svg>
<svg class="abs" style="left:1124.6px;top:93px" width="12" height="8" viewBox="0 0 12 8"><path d="M1 1.2 L6 6.2 L11 1.2" fill="none" stroke="#000" stroke-width="2" stroke-linecap="round" stroke-linejoin="round"/></svg>
<svg class="abs" style="left:690.4px;top:127px" width="12" height="8" viewBox="0 0 12 8"><path d="M1 1.2 L6 6.2 L11 1.2" fill="none" stroke="#000" stroke-width="2" stroke-linecap="round" stroke-linejoin="round"/></svg>
<svg class="abs" style="left:560.6px;top:355px" width="12" height="8" viewBox="0 0 12 8"><path d="M1 1.2 L6 6.2 L11 1.2" fill="none" stroke="#000" stroke-width="2" stroke-linecap="round" stroke-linejoin="round"/></svg>
<div class="abs t17" style="left:862px;top:346px">Date</div>
<div class="abs" style="left:910.5px;top:337px;font:italic 14.05px/16px var(--tah);color:#111">After Searching Press Enter, Tab or Click Out of Box</div>
<div class="abs" style="left:910px;top:353px;width:332px;height:26px;background:#fdf7c3;border:1px solid #222;font:17.4px/26px var(--ari);color:#b9b7a2;padding-left:3px">Enter: Date</div>
<div class="abs" id="grid"></div>
<div class="abs" id="ghead"></div>
<div class="abs hc" style="left:434px">Tag</div>
<div class="abs hc" style="left:475px">Id #</div>
<div class="abs hc" style="left:550px">Date</div>
<div class="abs hc" style="left:645px">Vendor</div>
<div class="abs hc" style="left:798px">Section</div>
<div class="abs hc" style="left:952px">Item</div>
<div class="abs hc" style="right:605px">Quan</div>
<div class="abs hc" style="right:517px">Cost Amt</div>
<div class="abs hs" style="left:470px"></div>
<div class="abs hs" style="left:546px"></div>
<div class="abs hs" style="left:640px"></div>
<div class="abs hs" style="left:793px"></div>
<div class="abs hs" style="left:946px"></div>
<div class="abs hs" style="left:1112px"></div>
<div class="abs hs" style="left:1187px"></div>
<div class="abs hs" style="left:1276px"></div>
<div class="row abs rsel" style="top:423px;height:26px;line-height:27px"><span class="rcb"></span><span class="vs" style="left:48px"></span><span class="vs" style="left:124px"></span><span class="vs" style="left:218px"></span><span class="vs" style="left:371px"></span><span class="vs" style="left:524px"></span><span class="vs" style="left:690px"></span><span class="vs" style="left:765px"></span><span class="vs" style="left:854px"></span><span class="c" style="left:54.69999999999999px">43</span><span class="c" style="left:130px">2026-02-02</span><span class="c" style="left:224.60000000000002px;letter-spacing:.55px;">VARSITY SPIRIT FAS...</span><span class="c" style="left:377.6px">Clothing</span><span class="c" style="left:530.5px">Cougarette&#39;s T-Shirt</span><span class="c" style="right:403.29999999999995px">15</span><span class="c" style="right:315.5px">225</span></div>
<div class="row abs alt" style="top:449px;height:26px;line-height:27px"><span class="rcb"></span><span class="vs" style="left:48px"></span><span class="vs" style="left:124px"></span><span class="vs" style="left:218px"></span><span class="vs" style="left:371px"></span><span class="vs" style="left:524px"></span><span class="vs" style="left:690px"></span><span class="vs" style="left:765px"></span><span class="vs" style="left:854px"></span><span class="c" style="left:54.69999999999999px">41</span><span class="c" style="left:130px">2023-02-23</span><span class="c" style="left:224.60000000000002px;letter-spacing:.55px;">BOOKS A MILLION</span><span class="c" style="left:530.5px">Composition Notebooks</span><span class="c" style="right:403.29999999999995px">205</span><span class="c" style="right:315.5px">123</span></div>
<div class="row abs" style="top:475px;height:26px;line-height:27px"><span class="rcb"></span><span class="vs" style="left:48px"></span><span class="vs" style="left:124px"></span><span class="vs" style="left:218px"></span><span class="vs" style="left:371px"></span><span class="vs" style="left:524px"></span><span class="vs" style="left:690px"></span><span class="vs" style="left:765px"></span><span class="vs" style="left:854px"></span><span class="c" style="left:54.69999999999999px">40</span><span class="c" style="left:130px">2023-02-23</span><span class="c" style="left:224.60000000000002px;letter-spacing:.55px;">UNIFORM COTTAGE</span><span class="c" style="left:530.5px">Boy&#39;s Uniform Pants</span><span class="c" style="right:403.29999999999995px">10</span><span class="c" style="right:315.5px">125</span></div>
<div class="row abs alt" style="top:501px;height:26px;line-height:27px"><span class="rcb"></span><span class="vs" style="left:48px"></span><span class="vs" style="left:124px"></span><span class="vs" style="left:218px"></span><span class="vs" style="left:371px"></span><span class="vs" style="left:524px"></span><span class="vs" style="left:690px"></span><span class="vs" style="left:765px"></span><span class="vs" style="left:854px"></span><span class="c" style="left:54.69999999999999px">39</span><span class="c" style="left:130px">2023-02-23</span><span class="c" style="left:224.60000000000002px;letter-spacing:.55px;">UNIFORM COTTAGE</span><span class="c" style="left:530.5px">Boy&#39;s Uniform Pants</span><span class="c" style="right:403.29999999999995px">10</span><span class="c" style="right:315.5px">125</span></div>
<div class="row abs" style="top:527px;height:26px;line-height:27px"><span class="rcb"></span><span class="vs" style="left:48px"></span><span class="vs" style="left:124px"></span><span class="vs" style="left:218px"></span><span class="vs" style="left:371px"></span><span class="vs" style="left:524px"></span><span class="vs" style="left:690px"></span><span class="vs" style="left:765px"></span><span class="vs" style="left:854px"></span><span class="c" style="left:54.69999999999999px">38</span><span class="c" style="left:130px">2021-05-04</span><span class="c" style="left:224.60000000000002px;letter-spacing:.55px;">VARSITY SPIRIT FAS...</span><span class="c" style="left:530.5px">Summer Camp Week 1...</span><span class="c" style="right:403.29999999999995px">35</span><span class="c" style="right:315.5px">0.35</span></div>
<div class="row abs alt" style="top:553px;height:26px;line-height:27px"><span class="rcb"></span><span class="vs" style="left:48px"></span><span class="vs" style="left:124px"></span><span class="vs" style="left:218px"></span><span class="vs" style="left:371px"></span><span class="vs" style="left:524px"></span><span class="vs" style="left:690px"></span><span class="vs" style="left:765px"></span><span class="vs" style="left:854px"></span><span class="c" style="left:54.69999999999999px">37</span><span class="c" style="left:130px">2021-05-04</span><span class="c" style="left:224.60000000000002px;letter-spacing:.55px;">VARSITY SPIRIT FAS...</span><span class="c" style="left:530.5px">20-21 COVID Spirit Shirt</span><span class="c" style="right:403.29999999999995px">100</span><span class="c" style="right:315.5px">800</span></div>
<div class="row abs" style="top:579px;height:26px;line-height:27px"><span class="rcb"></span><span class="vs" style="left:48px"></span><span class="vs" style="left:124px"></span><span class="vs" style="left:218px"></span><span class="vs" style="left:371px"></span><span class="vs" style="left:524px"></span><span class="vs" style="left:690px"></span><span class="vs" style="left:765px"></span><span class="vs" style="left:854px"></span><span class="c" style="left:54.69999999999999px">36</span><span class="c" style="left:530.5px">2021 Senior T-Shirt</span><span class="c" style="right:403.29999999999995px">50</span><span class="c" style="right:315.5px">0</span></div>
<div class="row abs alt" style="top:605px;height:26px;line-height:27px"><span class="rcb"></span><span class="vs" style="left:48px"></span><span class="vs" style="left:124px"></span><span class="vs" style="left:218px"></span><span class="vs" style="left:371px"></span><span class="vs" style="left:524px"></span><span class="vs" style="left:690px"></span><span class="vs" style="left:765px"></span><span class="vs" style="left:854px"></span><span class="c" style="left:54.69999999999999px">35</span><span class="c" style="left:377.6px">Clothing</span><span class="c" style="left:530.5px">Long Sleeve T-Shirt</span><span class="c" style="right:403.29999999999995px">20</span><span class="c" style="right:315.5px">0</span></div>
<div class="row abs" style="top:631px;height:26px;line-height:27px"><span class="rcb"></span><span class="vs" style="left:48px"></span><span class="vs" style="left:124px"></span><span class="vs" style="left:218px"></span><span class="vs" style="left:371px"></span><span class="vs" style="left:524px"></span><span class="vs" style="left:690px"></span><span class="vs" style="left:765px"></span><span class="vs" style="left:854px"></span><span class="c" style="left:54.69999999999999px">34</span><span class="c" style="left:377.6px">Clothing</span><span class="c" style="left:530.5px">2021 Hoodie</span><span class="c" style="right:403.29999999999995px">50</span><span class="c" style="right:315.5px">1250</span></div>
<div class="row abs alt" style="top:657px;height:26px;line-height:27px"><span class="rcb"></span><span class="vs" style="left:48px"></span><span class="vs" style="left:124px"></span><span class="vs" style="left:218px"></span><span class="vs" style="left:371px"></span><span class="vs" style="left:524px"></span><span class="vs" style="left:690px"></span><span class="vs" style="left:765px"></span><span class="vs" style="left:854px"></span><span class="c" style="left:54.69999999999999px">33</span><span class="c" style="left:130px">2021-02-15</span><span class="c" style="left:224.60000000000002px;letter-spacing:.55px;">BOOKS A MILLION</span><span class="c" style="left:530.5px">Composition Notebooks</span><span class="c" style="right:403.29999999999995px">15</span><span class="c" style="right:315.5px">9</span></div>
<div class="row abs" style="top:683px;height:26px;line-height:27px"><span class="rcb"></span><span class="vs" style="left:48px"></span><span class="vs" style="left:124px"></span><span class="vs" style="left:218px"></span><span class="vs" style="left:371px"></span><span class="vs" style="left:524px"></span><span class="vs" style="left:690px"></span><span class="vs" style="left:765px"></span><span class="vs" style="left:854px"></span><span class="c" style="left:54.69999999999999px">32</span><span class="c" style="left:130px">2021-02-15</span><span class="c" style="left:224.60000000000002px;letter-spacing:.55px;">BOOKS A MILLION</span><span class="c" style="left:530.5px">Merriam-Webster&#39;s Dic...</span><span class="c" style="right:403.29999999999995px">44</span><span class="c" style="right:315.5px">417.56</span></div>
<div class="row abs alt" style="top:709px;height:26px;line-height:27px"><span class="rcb"></span><span class="vs" style="left:48px"></span><span class="vs" style="left:124px"></span><span class="vs" style="left:218px"></span><span class="vs" style="left:371px"></span><span class="vs" style="left:524px"></span><span class="vs" style="left:690px"></span><span class="vs" style="left:765px"></span><span class="vs" style="left:854px"></span><span class="c" style="left:54.69999999999999px">31</span><span class="c" style="left:130px">2021-02-15</span><span class="c" style="left:224.60000000000002px;letter-spacing:.55px;">BOOKS A MILLION</span><span class="c" style="left:530.5px">Composition Notebooks</span><span class="c" style="right:403.29999999999995px">209</span><span class="c" style="right:315.5px">104.5</span></div>
<div class="row abs" style="top:735px;height:26px;line-height:27px"><span class="rcb"></span><span class="vs" style="left:48px"></span><span class="vs" style="left:124px"></span><span class="vs" style="left:218px"></span><span class="vs" style="left:371px"></span><span class="vs" style="left:524px"></span><span class="vs" style="left:690px"></span><span class="vs" style="left:765px"></span><span class="vs" style="left:854px"></span><span class="c" style="left:54.69999999999999px">30</span><span class="c" style="left:130px">2021-02-15</span><span class="c" style="left:224.60000000000002px;letter-spacing:.55px;">ATHLETIC RESOURC...</span><span class="c" style="left:530.5px">Baseball Cap</span><span class="c" style="right:403.29999999999995px">79</span><span class="c" style="right:315.5px">395</span></div>
<div class="row abs alt" style="top:761px;height:26px;line-height:27px"><span class="rcb"></span><span class="vs" style="left:48px"></span><span class="vs" style="left:124px"></span><span class="vs" style="left:218px"></span><span class="vs" style="left:371px"></span><span class="vs" style="left:524px"></span><span class="vs" style="left:690px"></span><span class="vs" style="left:765px"></span><span class="vs" style="left:854px"></span><span class="c" style="left:54.69999999999999px">29</span><span class="c" style="left:130px">2021-02-15</span><span class="c" style="left:224.60000000000002px;letter-spacing:.55px;">ATHLETIC RESOURC...</span><span class="c" style="left:530.5px">School Hoodie</span><span class="c" style="right:403.29999999999995px">75</span><span class="c" style="right:315.5px">1875</span></div>
<div class="row abs" style="top:787px;height:26px;line-height:27px"><span class="rcb"></span><span class="vs" style="left:48px"></span><span class="vs" style="left:124px"></span><span class="vs" style="left:218px"></span><span class="vs" style="left:371px"></span><span class="vs" style="left:524px"></span><span class="vs" style="left:690px"></span><span class="vs" style="left:765px"></span><span class="vs" style="left:854px"></span><span class="c" style="left:54.69999999999999px">28</span><span class="c" style="left:130px">2021-02-15</span><span class="c" style="left:224.60000000000002px;letter-spacing:.55px;">UNIFORM COTTAGE</span><span class="c" style="left:530.5px">Lands&#39; End Polo Shirt</span><span class="c" style="right:403.29999999999995px">18</span><span class="c" style="right:315.5px">366.48</span></div>
<div class="row abs alt" style="top:813px;height:26px;line-height:27px"><span class="rcb"></span><span class="vs" style="left:48px"></span><span class="vs" style="left:124px"></span><span class="vs" style="left:218px"></span><span class="vs" style="left:371px"></span><span class="vs" style="left:524px"></span><span class="vs" style="left:690px"></span><span class="vs" style="left:765px"></span><span class="vs" style="left:854px"></span><span class="c" style="left:54.69999999999999px">27</span><span class="c" style="left:130px">2021-02-15</span><span class="c" style="left:224.60000000000002px;letter-spacing:.55px;">UNIFORM COTTAGE</span><span class="c" style="left:530.5px">Girls Uniform Top</span><span class="c" style="right:403.29999999999995px">63</span><span class="c" style="right:315.5px">504</span></div>
<div class="row abs" style="top:839px;height:26px;line-height:27px"><span class="rcb"></span><span class="vs" style="left:48px"></span><span class="vs" style="left:124px"></span><span class="vs" style="left:218px"></span><span class="vs" style="left:371px"></span><span class="vs" style="left:524px"></span><span class="vs" style="left:690px"></span><span class="vs" style="left:765px"></span><span class="vs" style="left:854px"></span><span class="c" style="left:54.69999999999999px">26</span><span class="c" style="left:130px">2021-02-15</span><span class="c" style="left:224.60000000000002px;letter-spacing:.55px;">UNIFORM COTTAGE</span><span class="c" style="left:530.5px">Boys Uniform Top</span><span class="c" style="right:403.29999999999995px">59</span><span class="c" style="right:315.5px">472</span></div>
<div class="row abs alt" style="top:865px;height:25px;line-height:26px"><span class="rcb"></span><span class="vs" style="left:48px"></span><span class="vs" style="left:124px"></span><span class="vs" style="left:218px"></span><span class="vs" style="left:371px"></span><span class="vs" style="left:524px"></span><span class="vs" style="left:690px"></span><span class="vs" style="left:765px"></span><span class="vs" style="left:854px"></span><span class="c" style="left:54.69999999999999px">25</span><span class="c" style="left:130px">2021-02-15</span><span class="c" style="left:224.60000000000002px;">ATLAS PEN &amp; PENCI...</span><span class="c" style="left:530.5px">Jump Rope</span><span class="c" style="right:403.29999999999995px">99</span><span class="c" style="right:315.5px">404.91</span></div>
<div class="row abs" style="top:890px;height:26px;line-height:27px"><span class="rcb"></span><span class="vs" style="left:48px"></span><span class="vs" style="left:124px"></span><span class="vs" style="left:218px"></span><span class="vs" style="left:371px"></span><span class="vs" style="left:524px"></span><span class="vs" style="left:690px"></span><span class="vs" style="left:765px"></span><span class="vs" style="left:854px"></span><span class="c" style="left:54.69999999999999px">24</span><span class="c" style="left:130px">2021-02-15</span><span class="c" style="left:224.60000000000002px;letter-spacing:.55px;">UNIFORM COTTAGE</span><span class="c" style="left:530.5px">Girls Uniform Dress</span><span class="c" style="right:403.29999999999995px">10</span><span class="c" style="right:315.5px">130</span></div>
<div class="row abs alt" style="top:916px;height:26px;line-height:27px"><span class="rcb"></span><span class="vs" style="left:48px"></span><span class="vs" style="left:124px"></span><span class="vs" style="left:218px"></span><span class="vs" style="left:371px"></span><span class="vs" style="left:524px"></span><span class="vs" style="left:690px"></span><span class="vs" style="left:765px"></span><span class="vs" style="left:854px"></span><span class="c" style="left:54.69999999999999px">23</span><span class="c" style="left:130px">2021-02-15</span><span class="c" style="left:224.60000000000002px;letter-spacing:.55px;">UNIFORM COTTAGE</span><span class="c" style="left:530.5px">Boy&#39;s Uniform Pants</span><span class="c" style="right:403.29999999999995px">1</span><span class="c" style="right:315.5px">12.5</span></div>
<div class="row abs" style="top:942px;height:26px;line-height:27px"><span class="rcb"></span><span class="vs" style="left:48px"></span><span class="vs" style="left:124px"></span><span class="vs" style="left:218px"></span><span class="vs" style="left:371px"></span><span class="vs" style="left:524px"></span><span class="vs" style="left:690px"></span><span class="vs" style="left:765px"></span><span class="vs" style="left:854px"></span><span class="c" style="left:54.69999999999999px">22</span><span class="c" style="left:130px">2021-02-15</span><span class="c" style="left:224.60000000000002px;letter-spacing:.55px;">BOOKS A MILLION</span><span class="c" style="left:530.5px">Kid TechPack Large Ba...</span><span class="c" style="right:403.29999999999995px">12</span><span class="c" style="right:315.5px">618</span></div>
<div class="row abs alt" style="top:968px;height:26px;line-height:27px"><span class="rcb"></span><span class="vs" style="left:48px"></span><span class="vs" style="left:124px"></span><span class="vs" style="left:218px"></span><span class="vs" style="left:371px"></span><span class="vs" style="left:524px"></span><span class="vs" style="left:690px"></span><span class="vs" style="left:765px"></span><span class="vs" style="left:854px"></span><span class="c" style="left:54.69999999999999px">21</span><span class="c" style="left:130px">2021-02-15</span><span class="c" style="left:224.60000000000002px;">Afterschool</span><span class="c" style="left:530.5px">Picture</span><span class="c" style="right:403.29999999999995px">28</span><span class="c" style="right:315.5px">391.44</span></div>
<div class="row abs" style="top:994px;height:26px;line-height:27px"><span class="rcb"></span><span class="vs" style="left:48px"></span><span class="vs" style="left:124px"></span><span class="vs" style="left:218px"></span><span class="vs" style="left:371px"></span><span class="vs" style="left:524px"></span><span class="vs" style="left:690px"></span><span class="vs" style="left:765px"></span><span class="vs" style="left:854px"></span><span class="c" style="left:54.69999999999999px">20</span><span class="c" style="left:130px">2021-02-15</span><span class="c" style="left:224.60000000000002px;">Afterschool</span><span class="c" style="left:530.5px">Picture</span><span class="c" style="right:403.29999999999995px">10</span><span class="c" style="right:315.5px">100</span></div>
<svg class="abs" style="left:1588px;top:402px" width="14" height="12" viewBox="0 0 14 12"><path d="M7 3.4 L11.2 9.4 L2.8 9.4 Z" fill="#8c8c8c" stroke="#8c8c8c" stroke-width="3" stroke-linejoin="round"/></svg>
<div class="abs" style="left:1589px;top:420px;width:12px;height:570px;border-radius:6px;background:#8c8c8c"></div>
<div class="abs" style="left:531px;top:368px;width:139px;height:139px;border-radius:50%;border:7px solid #f5923e;background:rgba(246,146,62,0.47)"></div>
</body></html>
